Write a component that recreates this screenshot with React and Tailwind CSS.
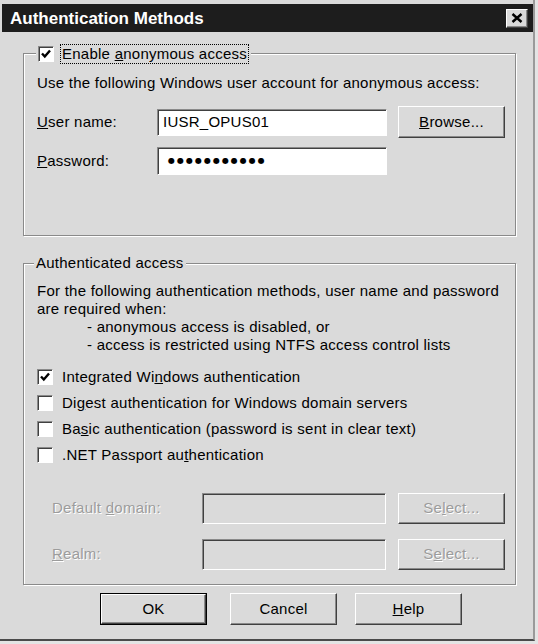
import React from 'react';

const raised = 'border border-t-white border-l-white border-r-[#404040] border-b-[#404040] shadow-[inset_-1px_-1px_0_#8a8a8a] bg-[#dadada]';
const sunken = 'border border-t-[#8a8a8a] border-l-[#8a8a8a] border-r-white border-b-white shadow-[inset_1px_1px_0_#404040]';
const etched = 'border border-[#8a8a8a] shadow-[inset_1px_1px_0_#fff,1px_1px_0_#fff]';
const disabledText = 'text-[#9c9c9c] [text-shadow:1px_1px_0_#fff]';

const Check = ({ checked }) => (
  <span className={`w-[16px] h-[16px] shrink-0 bg-white flex items-center justify-center ${sunken}`}>
    {checked && (
      <svg width="12" height="12" viewBox="0 0 12 12">
        <path d="M2 5.5 L4.8 8.5 L10 2.5" fill="none" stroke="#000" strokeWidth="2.4" />
      </svg>
    )}
  </span>
);

const Button = ({ children, className = '', disabled }) => (
  <div className={`w-[107px] flex items-center justify-center ${raised} ${disabled ? disabledText : ''} ${className}`}>
    {children}
  </div>
);

const CheckRow = ({ checked, children }) => (
  <div className="h-[26px] flex items-center">
    <Check checked={checked} />
    <span className="ml-[9px]">{children}</span>
  </div>
);

export default function App() {
  return (
    <div className="w-[538px] h-[644px] bg-[#e4e4e4] font-['Liberation_Sans',Arial,sans-serif] text-[15px] tracking-[0.25px] text-black">
      <div className="w-[535px] h-[641px] bg-[#dadada] border-r-2 border-b-2 border-r-[#9a9a9a] border-b-[#4a4a4a] pt-[4px] pl-[2px]">
        {/* title bar */}
        <div className="w-[531px] h-[28px] bg-[#1d1d1d] flex items-center justify-between pl-[8px] pr-[5px]">
          <span className="text-white font-bold text-[17px] tracking-normal leading-none">Authentication Methods</span>
          <div className={`w-[22px] h-[19px] flex items-center justify-center ${raised}`}>
            <svg width="12" height="10" viewBox="0 0 12 10">
              <path d="M1.5 1 L10.5 9 M10.5 1 L1.5 9" stroke="#000" strokeWidth="2.4" />
            </svg>
          </div>
        </div>

        {/* anonymous access */}
        <div className={`relative mt-[21px] ml-[21px] w-[493px] h-[183px] pl-[13px] pt-[20px] ${etched}`}>
          <div className="absolute left-[12px] top-[-10px] bg-[#dadada] px-[2px] flex items-center h-[20px]">
            <Check checked />
            <span className="ml-[6px] border border-dotted border-black px-[1px] leading-[18px]">
              Enable <u>a</u>nonymous access
            </span>
          </div>
          <div className="leading-[18px]">Use the following Windows user account for anonymous access:</div>
          <div className="flex items-center mt-[14px]">
            <span className="w-[120px]"><u>U</u>ser name:</span>
            <div className={`w-[230px] h-[27px] bg-white flex items-center pl-[5px] ${sunken}`}>IUSR_OPUS01</div>
            <Button className="ml-[11px] h-[32px]"><span><u>B</u>rowse...</span></Button>
          </div>
          <div className="flex items-center mt-[9px]">
            <span className="w-[120px]"><u>P</u>assword:</span>
            <div className={`w-[230px] h-[28px] bg-white flex items-center pl-[10px] font-['DejaVu_Sans',sans-serif] text-[8px] tracking-[2px] ${sunken}`}>
              ●●●●●●●●●●●
            </div>
          </div>
        </div>

        {/* authenticated access */}
        <div className={`relative mt-[27px] ml-[21px] w-[493px] h-[322px] pl-[13px] pt-[18px] ${etched}`}>
          <div className="absolute left-[10px] top-[-10px] bg-[#dadada] px-[2px] leading-[18px]">Authenticated access</div>
          <div className="leading-[18px]">
            <div>For the following authentication methods, user name and password</div>
            <div>are required when:</div>
            <div className="pl-[50px]">- anonymous access is disabled, or</div>
            <div className="pl-[50px]">- access is restricted using NTFS access control lists</div>
          </div>
          <div className="mt-[10px]">
            <CheckRow checked>Integrated Wi<u>n</u>dows authentication</CheckRow>
            <CheckRow>Di<u>g</u>est authentication for Windows domain servers</CheckRow>
            <CheckRow>Ba<u>s</u>ic authentication (password is sent in clear text)</CheckRow>
            <CheckRow>.NET Passport au<u>t</u>hentication</CheckRow>
          </div>
          <div className="flex items-center mt-[25px] pl-[15px]">
            <span className={`w-[150px] ${disabledText}`}>Default <u>d</u>omain:</span>
            <div className={`w-[184px] h-[31px] ${sunken}`} />
            <Button disabled className="ml-[12px] h-[31px]"><span>Se<u>l</u>ect...</span></Button>
          </div>
          <div className="flex items-center mt-[15px] pl-[15px]">
            <span className={`w-[150px] ${disabledText}`}><u>R</u>ealm:</span>
            <div className={`w-[184px] h-[31px] ${sunken}`} />
            <Button disabled className="ml-[12px] h-[31px]"><span>S<u>e</u>lect...</span></Button>
          </div>
        </div>

        {/* dialog buttons */}
        <div className="flex mt-[8px] pl-[98px]">
          <div className="w-[107px] h-[32px] border border-black">
            <div className={`w-full h-full flex items-center justify-center ${raised}`}>OK</div>
          </div>
          <Button className="ml-[23px] h-[32px]">Cancel</Button>
          <Button className="ml-[18px] h-[32px]"><span><u>H</u>elp</span></Button>
        </div>
      </div>
    </div>
  );
}
